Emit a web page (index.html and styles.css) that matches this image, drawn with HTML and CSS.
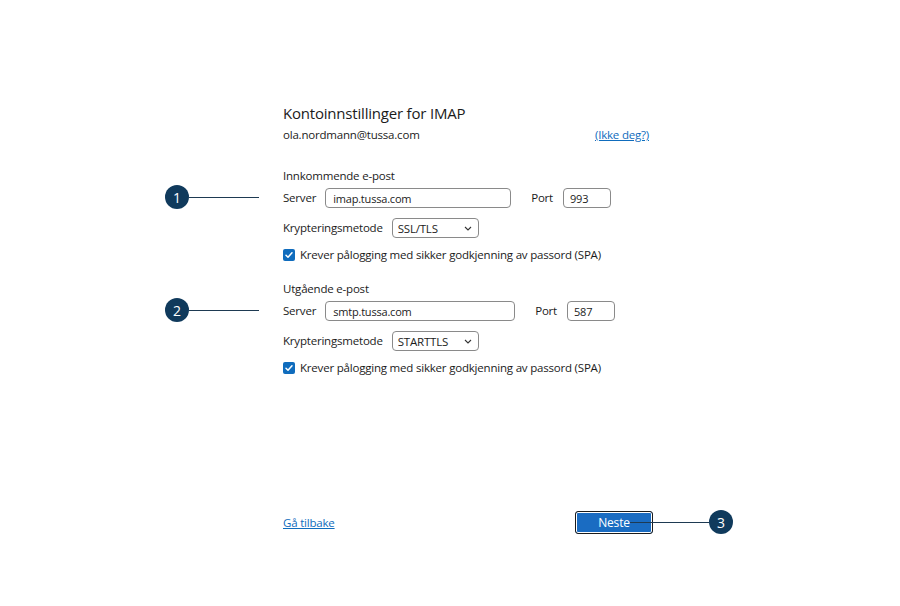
FILE: index.html
```html
<!DOCTYPE html>
<html lang="no">
<head>
<meta charset="utf-8">
<title>Kontoinnstillinger for IMAP</title>
<link rel="stylesheet" href="styles.css">
</head>
<body>
<main class="page">
  <div class="form">
    <h1 class="title">Kontoinnstillinger for IMAP</h1>
    <div class="account">
      <span>ola.nordmann@tussa.com</span>
      <a class="link" href="#">(Ikke deg?)</a>
    </div>

    <section class="group">
      <div class="callout callout-1"><span class="badge">1</span><span class="line"></span></div>
      <div class="group-title">Innkommende e-post</div>
      <div class="row">
        <span class="label">Server</span>
        <span class="input server in">imap.tussa.com</span>
        <span class="label port-label">Port</span>
        <span class="input port">993</span>
      </div>
      <div class="row">
        <span class="label">Krypteringsmetode</span>
        <span class="select">SSL/TLS<svg class="chev" viewBox="0 0 8 5" width="8" height="5"><path d="M1 1l3 3 3-3" fill="none" stroke="#333" stroke-width="1.1"/></svg></span>
      </div>
      <label class="check">
        <span class="box"><svg viewBox="0 0 12 12" width="12" height="12"><path d="M3 6.2l2 2 4-4.4" fill="none" stroke="#fff" stroke-width="1.5" stroke-linecap="round" stroke-linejoin="round"/></svg></span>
        <span>Krever pålogging med sikker godkjenning av passord (SPA)</span>
      </label>
    </section>

    <section class="group group-2">
      <div class="callout callout-2"><span class="badge">2</span><span class="line"></span></div>
      <div class="group-title">Utgående e-post</div>
      <div class="row">
        <span class="label">Server</span>
        <span class="input server out">smtp.tussa.com</span>
        <span class="label port-label">Port</span>
        <span class="input port">587</span>
      </div>
      <div class="row">
        <span class="label">Krypteringsmetode</span>
        <span class="select">STARTTLS<svg class="chev" viewBox="0 0 8 5" width="8" height="5"><path d="M1 1l3 3 3-3" fill="none" stroke="#333" stroke-width="1.1"/></svg></span>
      </div>
      <label class="check">
        <span class="box"><svg viewBox="0 0 12 12" width="12" height="12"><path d="M3 6.2l2 2 4-4.4" fill="none" stroke="#fff" stroke-width="1.5" stroke-linecap="round" stroke-linejoin="round"/></svg></span>
        <span>Krever pålogging med sikker godkjenning av passord (SPA)</span>
      </label>
    </section>

    <div class="footer">
      <a class="link back" href="#">Gå tilbake</a>
      <div class="next-wrap">
        <button class="next">Neste</button>
        <div class="callout callout-3"><span class="line"></span><span class="badge">3</span></div>
      </div>
    </div>
  </div>
</main>
</body>
</html>
```

FILE: styles.css
```css
* { box-sizing: border-box; }
html, body { margin: 0; padding: 0; background: #fff; }
body {
  font-family: "Open Sans", "Noto Sans", sans-serif;
  color: #1b1b1b;
  font-size: 11.5px;
  letter-spacing: -0.2px;
  width: 900px;
  height: 606px;
  overflow: hidden;
}
.page {
  padding: 103px 0 0 283px;
}
.form { width: 366px; display: flex; flex-direction: column; }
.title {
  margin: 0;
  font-size: 15px;
  font-weight: 400;
  line-height: 20px;
  letter-spacing: -0.2px;
}
.account {
  display: flex;
  justify-content: space-between;
  margin-top: 4px;
  line-height: 16px;
}
.link { color: #0f6cbd; text-decoration: underline; }
.group { position: relative; margin-top: 25px; display: flex; flex-direction: column; }
.group-2 { margin-top: 18px; }
.group-title { line-height: 16px; }
.row { display: flex; align-items: center; height: 20px; margin-top: 4px; }
.row + .row { margin-top: 10px; }
.label { line-height: 16px; }
.input {
  display: inline-flex;
  align-items: center;
  height: 20px;
  border: 1px solid #8a8a8a;
  border-radius: 4px;
  padding: 0 7px;
  font-size: 11px;
}
.server { margin-left: 9px; }
.server.in { width: 186px; }
.server.out { width: 190px; }
.port-label { margin-left: 20px; }
.port { margin-left: 10px; width: 48px; padding: 0 6px; }
.select {
  display: inline-flex;
  align-items: center;
  justify-content: space-between;
  margin-left: 9px;
  width: 87px;
  height: 20px;
  border: 1px solid #8a8a8a;
  border-radius: 4px;
  padding: 0 6px 0 5px;
}
.chev { margin-top: 1px; }
.check { display: flex; align-items: center; gap: 5px; margin-top: 9px; line-height: 16px; }
.box {
  width: 12px; height: 12px; border-radius: 2px;
  background: #0f6cbd;
  display: inline-flex; align-items: center; justify-content: center;
}
.box svg { display: block; }

.callout { position: absolute; display: flex; align-items: center; }
.callout-1, .callout-2 { left: -118px; top: 17px; }
.badge {
  width: 24px; height: 24px; border-radius: 50%;
  background: #103a5c;
  color: #fff;
  font-size: 14px;
  letter-spacing: 0;
  display: inline-flex; align-items: center; justify-content: center;
}
.line { display: block; height: 1px; background: #1e3a52; }
.callout-1 .line, .callout-2 .line { width: 70px; }

.footer {
  display: flex; justify-content: space-between; align-items: center;
  margin-top: 135px;
}
.back { line-height: 16px; }
.next-wrap { position: relative; margin-right: -4px; }
.next {
  display: block;
  width: 78px; height: 23px;
  background: #1a6cc2;
  color: #fff;
  border: 1px solid #1b1b1b;
  box-shadow: inset 0 0 0 1px #fff;
  border-radius: 3px;
  font-family: inherit;
  font-size: 12px;
  letter-spacing: -0.2px;
  padding: 0;
}
.callout-3 { left: 55px; top: -1px; }
.callout-3 .line { width: 79px; }
```
